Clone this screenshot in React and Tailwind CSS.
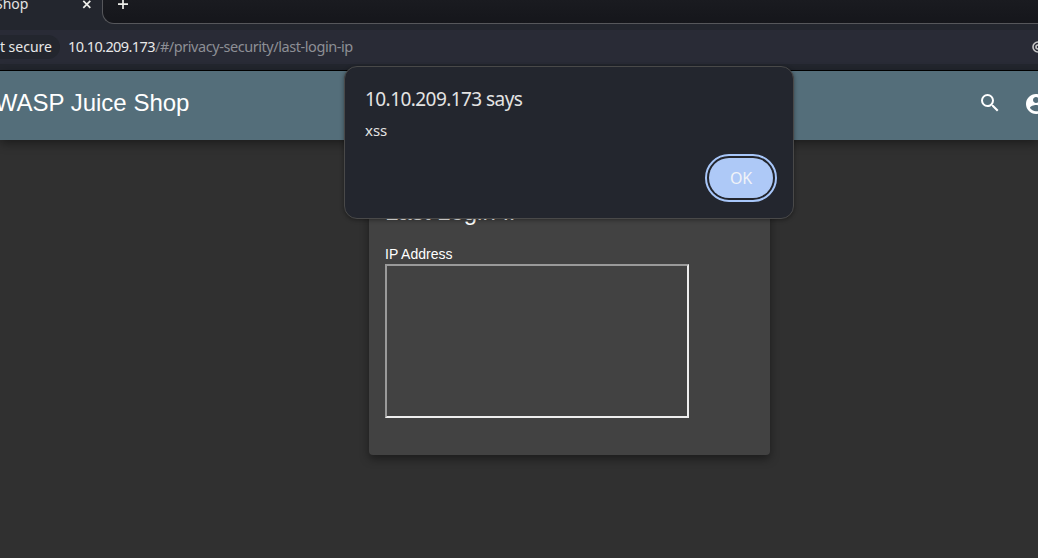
import React from "react";

function TabStrip() {
  return (
    <div className="flex h-6 shrink-0 bg-[#23262e]">
      <div className="flex w-[102px] shrink-0 items-start bg-[#23262e] text-[#e3e3e3]">
        <span className="-ml-[5px] -mt-[6px] w-[87px] text-[14px] leading-5">Shop</span>
        <svg className="h-[9px] w-[9px]" viewBox="0 0 9 9" fill="none" stroke="#eeeeea" strokeWidth="1.7">
          <path d="M1.3 .8 8.3 7.8M8.3 .8 1.3 7.8" />
        </svg>
      </div>
      <div className="h-6 grow rounded-bl-[12px] border-b border-l border-[#56575b] bg-linear-to-b from-[#1a1b20] to-[#15161b]">
        <svg className="ml-[15px] h-[9px] w-[11px]" viewBox="0 0 11 9" fill="none" stroke="#eeeeea" strokeWidth="1.7">
          <path d="M0 4.1H10M5 0V9" />
        </svg>
      </div>
    </div>
  );
}

function AddressBar() {
  return (
    <div className="h-[47px] shrink-0 border-b border-black bg-[#23262e] pt-[6px]">
      <div className="flex h-[34px] items-center bg-[#292b36] text-[14px] leading-5 text-[#e8e8e8]">
        <div className="flex h-6 w-[60px] items-center justify-end rounded-r-full bg-[#23262e] pr-2 whitespace-nowrap">
          Not secure
        </div>
        <div className="ml-2 grow pb-[2px] text-[14.5px] whitespace-nowrap">
          <span className="tracking-[-0.59px]">10.10.209.173</span>
          <span className="tracking-[-0.44px] text-[#8d8f95]">/#/privacy-security/last-login-ip</span>
        </div>
        <svg className="h-3 w-[6px]" viewBox="0 0 6 12" fill="none" stroke="#c7c7c7" strokeWidth="1.6">
          <circle cx="6" cy="6" r="5" />
          <circle cx="6" cy="6" r="2" />
        </svg>
      </div>
    </div>
  );
}

function SiteHeader() {
  return (
    <header className="relative flex h-[69px] shrink-0 items-center bg-[#546e7a] font-['Liberation_Sans',sans-serif] text-white shadow-[0_3px_10px_rgba(0,0,0,0.45)]">
      <h1 className="-ml-[24px] grow pb-[6px] text-[24px] leading-8 whitespace-nowrap">OWASP Juice Shop</h1>
      <svg className="mr-[22px] mb-[5px] h-6 w-6 shrink-0" viewBox="0 0 24 24" fill="white">
        <path d="M15.5 14h-.79l-.28-.27A6.471 6.471 0 0 0 16 9.5 6.5 6.5 0 1 0 9.5 16c1.61 0 3.09-.59 4.23-1.57l.27.28v.79l5 4.99L20.49 19l-4.99-5zm-6 0C7.01 14 5 11.99 5 9.5S7.01 5 9.5 5 14 7.01 14 9.5 11.99 14 9.5 14z" />
      </svg>
      <svg className="mb-[3px] h-6 w-[14px] shrink-0" viewBox="0 0 14 24" fill="white">
        <path d="M12 2C6.48 2 2 6.48 2 12s4.48 10 10 10 10-4.48 10-10S17.52 2 12 2zm0 3c1.66 0 3 1.34 3 3s-1.34 3-3 3-3-1.34-3-3 1.34-3 3-3zm0 14.2c-2.5 0-4.71-1.28-6-3.22.03-1.99 4-3.08 6-3.08 1.99 0 5.97 1.09 6 3.08-1.29 1.94-3.5 3.22-6 3.22z" />
      </svg>
    </header>
  );
}

function LoginCard() {
  return (
    <section className="ml-[369px] h-[275px] w-[401px] rounded bg-[#424242] px-4 pt-4 font-['Liberation_Sans',sans-serif] text-white shadow-[0_4px_10px_rgba(0,0,0,0.42)]">
      <h2 className="text-[24px] leading-8">Last Login IP</h2>
      <p className="mt-[17px] mb-px text-[14px] leading-[18px]">IP Address</p>
      <div className="h-[154px] w-[304px] border-2 border-t-[#9a9a9a] border-r-[#eeeeee] border-b-[#eeeeee] border-l-[#9a9a9a]" />
    </section>
  );
}

function AlertDialog() {
  return (
    <div role="alertdialog" className="absolute top-[66px] left-[344px] flex h-[153px] w-[450px] flex-col rounded-[13px] border border-[#494949] bg-[#23262e] pt-[18px] pr-4 pl-5 text-[#e3e3e3] shadow-[0_1px_4px_rgba(0,0,0,0.4)]">
      <div className="text-[19px] leading-7 tracking-[-0.56px]">10.10.209.173 says</div>
      <div className="mt-[7px] text-[15px] leading-5">xss</div>
      <button className="mt-[14px] flex h-12 w-[72px] items-center justify-center self-end rounded-full border-2 border-[#a8c7fa] p-[2px]">
        <span className="flex h-full w-full items-center justify-center rounded-full bg-[#aec9f7] text-[16px] tracking-[-0.3px] text-[#f1f3f7]">OK</span>
      </button>
    </div>
  );
}

export default function App() {
  return (
    <div className="relative flex h-[558px] w-[1038px] flex-col overflow-hidden bg-[#303030] font-['Noto_Sans',sans-serif]">
      <TabStrip />
      <AddressBar />
      <SiteHeader />
      <main className="grow pt-10">
        <LoginCard />
      </main>
      <AlertDialog />
    </div>
  );
}
